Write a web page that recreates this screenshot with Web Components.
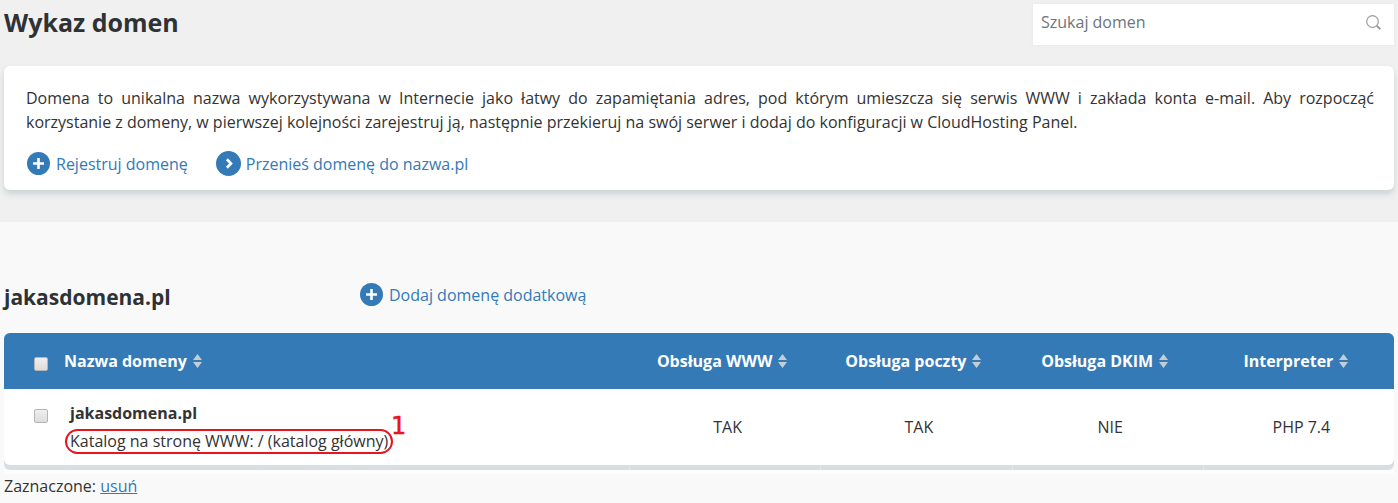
<!DOCTYPE html>
<html lang="pl">
<head>
<meta charset="utf-8">
<title>Wykaz domen</title>
<style>
html,body{margin:0;padding:0;background:#f9f9f9;font-family:"Open Sans",sans-serif;color:#333;font-size:16px}
.l1{display:block;text-align-last:justify}
</style>
</head>
<body>
<top-area>
	<page-head title="Wykaz domen"></page-head>
	<info-card>
		<span class="l1">Domena to unikalna nazwa wykorzystywana w Internecie jako łatwy do zapamiętania adres, pod którym umieszcza się serwis WWW i zakłada konta e-mail. Aby rozpocząć</span>
		korzystanie z domeny, w pierwszej kolejności zarejestruj ją, następnie przekieruj na swój serwer i dodaj do konfiguracji w CloudHosting Panel.
		<icon-link slot="links" icon="plus" size="23">Rejestruj domenę</icon-link>
		<icon-link slot="links" icon="next" size="25">Przenieś domenę do nazwa.pl</icon-link>
	</info-card>
</top-area>
<domain-section name="jakasdomena.pl">
	<icon-link slot="action" icon="plus" size="23">Dodaj domenę dodatkową</icon-link>
	<domain-table></domain-table>
</domain-section>
<script>
const ICONS={
	plus:'<path d="M11.5 6v11M6 11.5h11" stroke="#fff" stroke-width="2.6" fill="none"/>',
	next:'<path d="M10 7.6l3.8 3.9-3.8 3.9" stroke="#fff" stroke-width="2.4" fill="none"/>'
};
class TopArea extends HTMLElement{
	constructor(){
		super();
		this.attachShadow({mode:'open'}).innerHTML=`<style>
			:host{display:block;background:#f0f0f0;height:222px;padding:0 4px;box-sizing:border-box}
		</style><slot></slot>`;
	}
}
class PageHead extends HTMLElement{
	constructor(){
		super();
		this.attachShadow({mode:'open'}).innerHTML=`<style>
			:host{display:flex;justify-content:space-between;height:66px}
			h1{margin:0;font-size:25px;line-height:34px;padding-top:5px;font-weight:700;color:#2f3235}
			.search{width:361px;height:41px;margin-top:4px;background:#fff;display:flex;align-items:center;justify-content:space-between;padding:0 12px 5px 8px;box-sizing:border-box;color:#6c757d;font-size:16px;box-shadow:0 0 4px rgba(0,0,0,.04)}
			svg{display:block;margin-top:1px}
		</style><h1></h1><div class="search"><span>Szukaj domen</span><svg width="17" height="17" viewBox="0 0 17 17"><circle cx="7.5" cy="7.5" r="5.8" fill="none" stroke="#9a9fa3" stroke-width="1.2"/><path d="M11.8 11.8l3.6 3.4" stroke="#8f9498" stroke-width="1.8"/></svg></div>`;
		this.shadowRoot.querySelector("h1").textContent=this.getAttribute("title");
	}
}
class InfoCard extends HTMLElement{
	constructor(){
		super();
		this.attachShadow({mode:'open'}).innerHTML=`<style>
			:host{display:block;background:#fff;border-radius:6px;padding:20px 20px 0 22px;height:124px;box-sizing:border-box;box-shadow:0 4px 6px rgba(120,140,150,.3)}
			.txt{line-height:24px;text-align:justify;color:#333}
			.links{display:flex;gap:28px;margin-top:17px;margin-left:1px;align-items:center}
		</style><div class="txt"><slot></slot></div><div class="links"><slot name="links"></slot></div>`;
	}
}
class IconLink extends HTMLElement{
	constructor(){
		super();
		const size=this.getAttribute("size");
		this.attachShadow({mode:'open'}).innerHTML=`<style>
			:host{display:inline-flex;align-items:center;gap:${size>23?5:6}px;color:#337ab7;font-size:16px;line-height:24px}
			svg{display:block}
		</style><svg width="${size}" height="${size}" viewBox="0 0 23 23"><circle cx="11.5" cy="11.5" r="11.5" fill="#337ab7"/>${ICONS[this.getAttribute("icon")]}</svg><span><slot></slot></span>`;
	}
}
class DomainSection extends HTMLElement{
	constructor(){
		super();
		this.attachShadow({mode:'open'}).innerHTML=`<style>
			:host{display:block;padding:0 4px}
			.head{display:flex;align-items:center;height:111px;box-sizing:border-box}
			h2{margin:0;width:356px;font-size:21px;font-weight:700;color:#2f3235;padding-top:38px;line-height:30px}
			.act{padding-top:39px}
		</style><div class="head"><h2></h2><div class="act"><slot name="action"></slot></div></div><slot></slot>`;
		this.shadowRoot.querySelector("h2").textContent=this.getAttribute("name");
	}
}
class SortHead extends HTMLElement{
	constructor(){
		super();
		this.attachShadow({mode:'open'}).innerHTML=`<style>
			:host{display:inline-flex;align-items:center;gap:6px;font-weight:700;color:#fff;font-size:16px}
			svg{display:block}
		</style><span><slot></slot></span><svg width="9" height="14" viewBox="0 0 9 14"><path d="M4.5 0L9 6H0zM4.5 14L0 8h9z" fill="#c4ccd4"/></svg>`;
	}
}
class CheckBox extends HTMLElement{
	constructor(){
		super();
		this.attachShadow({mode:'open'}).innerHTML=`<style>
			:host{display:block;width:14px;height:14px;box-sizing:border-box;border:1px solid #b5b5b5;border-radius:2px;background:linear-gradient(#efefef,#dcdcdc)}
		</style>`;
	}
}
class DomainTable extends HTMLElement{
	constructor(){
		super();
		const cols=[["Obsługa WWW","TAK"],["Obsługa poczty","TAK"],["Obsługa DKIM","NIE"],["Interpreter","PHP 7.4"]];
		this.attachShadow({mode:'open'}).innerHTML=`<style>
			:host{display:block}
			.wrap{border-radius:6px;overflow:hidden;background:#d7dde0}
			.row{display:grid;grid-template-columns:625px repeat(4,1fr)}
			.hd{background:#337ab7;height:56px;align-items:center}
			.hd .c{padding-right:5px}
			.bd{background:#fff;height:76px;border-radius:0 0 6px 6px}
			.first{display:flex;align-items:center;padding-left:30px;gap:16px}
			.hd .first check-box{margin-top:6px}
			.bd .first{align-items:flex-start;padding-top:12px;gap:22px;position:relative}
			.bd .first check-box{margin-top:8px}
			.name{font-weight:700;line-height:24px}
			.sub{line-height:24px;margin-top:4px}
			.c{text-align:center}
			.bd .c{line-height:76px;padding-left:6px}
			.band{height:5px}
			.band div+div{border-left:1px solid #e3e7e9}
			.strip{height:4px;background:#fdfdfd}
			.oval{position:absolute;left:61px;top:40px;width:328px;height:25px;box-sizing:border-box;border:2px solid #e8141e;border-radius:13px}
			.num{position:absolute;left:387px;top:23px;color:#e8141e;font:400 24px/28px "DejaVu Sans",sans-serif;-webkit-text-stroke:.5px #e8141e}
			.foot{line-height:24px}
			a{color:#337ab7;text-decoration:underline}
		</style><div class="wrap"><div class="row hd"><div class="first"><check-box></check-box><sort-head>Nazwa domeny</sort-head></div>${cols.map(c=>`<div class="c"><sort-head>${c[0]}</sort-head></div>`).join("")}</div>
		<div class="row bd"><div class="first"><check-box></check-box><div><div class="name">jakasdomena.pl</div><div class="sub">Katalog na stronę WWW: / (katalog główny)</div></div><div class="oval"></div><div class="num">1</div></div>${cols.map(c=>`<div class="c">${c[1]}</div>`).join("")}</div>
		<div class="row band"><div></div><div></div><div></div><div></div><div></div></div></div>
		<div class="strip"></div>
		<div class="foot">Zaznaczone: <a href="#">usuń</a></div>`;
	}
}
customElements.define("top-area",TopArea);
customElements.define("page-head",PageHead);
customElements.define("info-card",InfoCard);
customElements.define("icon-link",IconLink);
customElements.define("domain-section",DomainSection);
customElements.define("sort-head",SortHead);
customElements.define("check-box",CheckBox);
customElements.define("domain-table",DomainTable);
</script>
</body>
</html>
